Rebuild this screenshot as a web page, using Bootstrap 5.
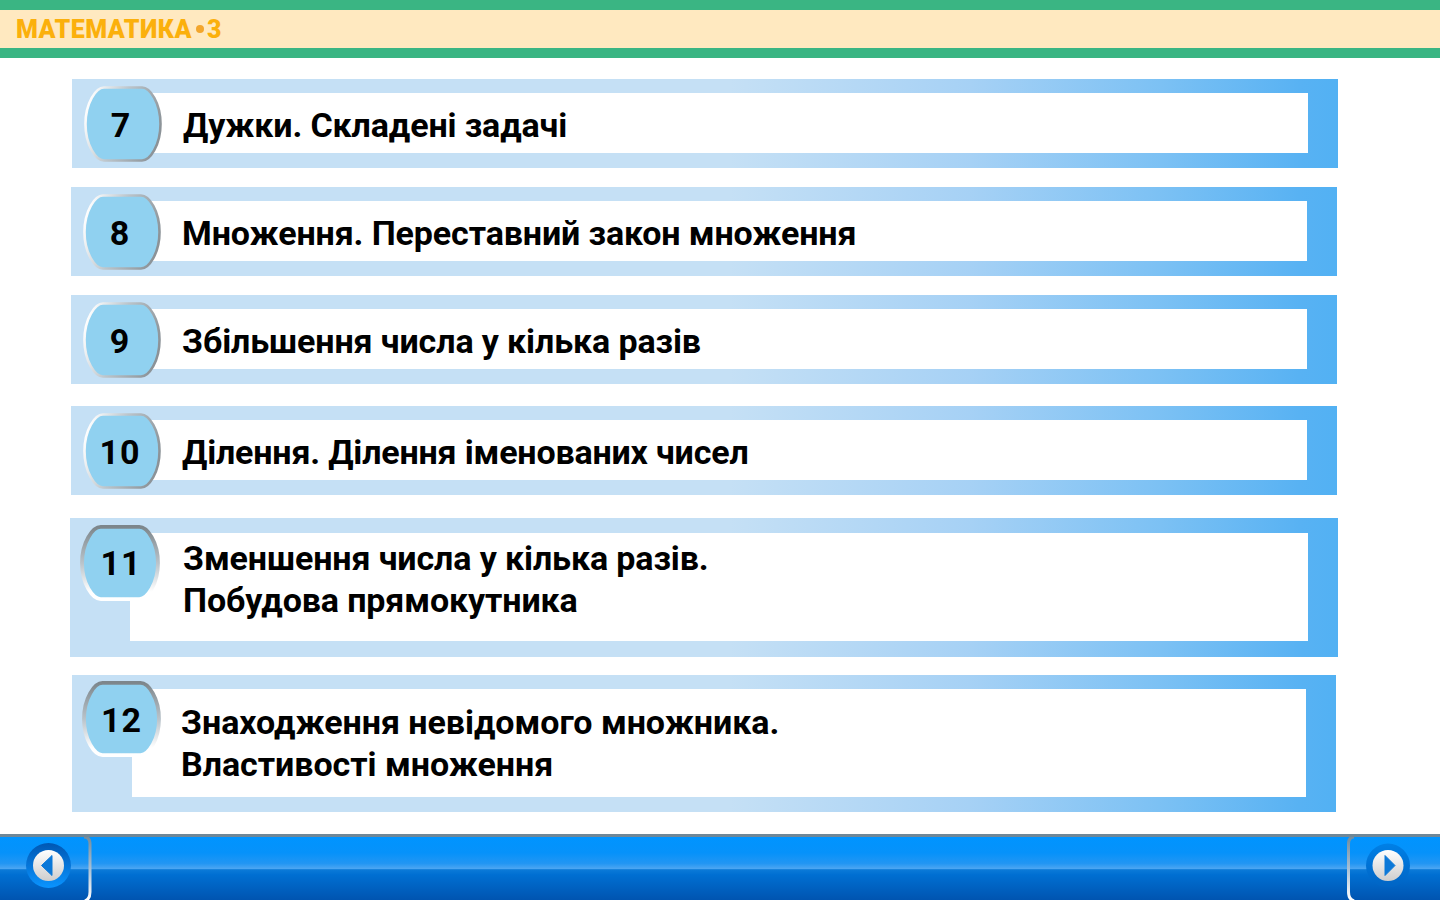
<!DOCTYPE html>
<html lang="uk">
<head>
<meta charset="utf-8">
<meta name="viewport" content="width=device-width, initial-scale=1">
<title>Математика 3</title>
<link href="https://cdn.jsdelivr.net/npm/bootstrap@5.3.0/dist/css/bootstrap.min.css" rel="stylesheet">
<script src="https://cdn.jsdelivr.net/npm/bootstrap@5.3.0/dist/js/bootstrap.bundle.min.js" defer></script>
<style>
body{font-family:Roboto,"Liberation Sans",sans-serif;color:#000;background:#fff}
.topbar{height:58px;background:#ffe9c0;border-top:10px solid #3ab583;border-bottom:10px solid #3ab583;padding-left:16px}
.brand{font-size:25px;font-weight:900;line-height:36px;color:#fbb00c;letter-spacing:.45px;padding-top:2px}
.brand .dot{width:8px;height:8px;border-radius:50%;background:#f3a62c;margin:0 3px 2px 4px}
.lessons{height:776px;padding-top:21px}
.lesson{width:1266px;height:89px;margin-left:71px;margin-bottom:19px;padding:14px 30px 15px 59px;text-decoration:none;color:#000;
background:linear-gradient(90deg,#c5e0f5 0,#c5e0f5 52%,#a6d1f5 71%,#7cc1f4 86%,#58b2f3 97%,#52b1f3 100%)}
.lesson:first-child{margin-left:72px}
.lesson.ten{margin-top:22px;margin-bottom:23px}
.lesson.tall{height:139px;width:1268px;margin-left:70px;padding:15px 30px 16px 60px;margin-bottom:18px}
.lesson.last{height:137px;width:1264px;margin-left:72px;padding:14px 30px 15px 60px}
.panel{background:#fff;padding-left:52px}
.title{font-size:34px;font-weight:700;line-height:42px;white-space:nowrap;letter-spacing:-.12px}
.ten .title{letter-spacing:-.18px}
.last .title{letter-spacing:-.04px}
.num{left:12px;top:7px;width:78px;height:76px;font-size:34px;font-weight:700;letter-spacing:1px}
.num svg{left:0;top:0}
.num span{padding-right:4px;padding-top:2px}
.tall .num{left:10px;width:80px}
.last .num{left:10px;top:6px}
.tall .num span{padding-left:2px;padding-right:0;padding-top:0}
.last .num span{padding-left:1px;padding-right:0;padding-top:2px}
.tall .panel{padding-left:53px;padding-top:4px}
.last .panel{padding-left:49px;padding-top:12px}
.footer{height:66px;border-top:3px solid #6f8797;background:linear-gradient(#0094ff 0,#0692fa 25%,#2296f3 42%,#4aa5f2 50%,#0b7ad8 52%,#006fd2 60%,#0054b0 100%)}
</style>
</head>
<body class="overflow-hidden">
<svg width="0" height="0" class="position-absolute"><defs>
<linearGradient id="gd" x1="0" y1=".3" x2="1" y2=".6"><stop offset="0" stop-color="#fff"/><stop offset=".45" stop-color="#bcc5cb"/><stop offset="1" stop-color="#8b9297"/></linearGradient>
<linearGradient id="gv" x1="0" y1="0" x2="0" y2="1"><stop offset="0" stop-color="#7d868b"/><stop offset=".5" stop-color="#b9c3ca"/><stop offset=".9" stop-color="#fff"/></linearGradient>
<linearGradient id="ring" x1="0" y1="0" x2="0" y2="1"><stop offset="0" stop-color="#0057b3"/><stop offset="1" stop-color="#0a94ff"/></linearGradient>
<linearGradient id="ring2" x1="0" y1="0" x2="0" y2="1"><stop offset="0" stop-color="#0080e6"/><stop offset="1" stop-color="#0064c4"/></linearGradient>
<linearGradient id="disc" x1="0" y1="0" x2="0" y2="1"><stop offset="0" stop-color="#fff"/><stop offset="1" stop-color="#cdcdcd"/></linearGradient>
<linearGradient id="edge" x1="0" y1="0" x2="0" y2="66" gradientUnits="userSpaceOnUse"><stop offset="0" stop-color="#6f8797"/><stop offset=".5" stop-color="#a5bdd2"/><stop offset="1" stop-color="#fff"/></linearGradient>
<path id="pill" d="M20 1.500H58C66 1.500 76.500 17 76.500 38S66 74.500 58 74.500H20C12 74.500 1.500 59 1.500 38S12 1.500 20 1.500Z"/>
</defs></svg>
<header class="topbar d-flex align-items-center">
<div class="brand d-flex align-items-center"><span>МАТЕМАТИКА</span><i class="dot"></i><span>3</span></div>
</header>
<main class="lessons">
<a class="lesson d-block position-relative"><div class="panel h-100 d-flex align-items-center"><div class="title pt-1">Дужки. Складені задачі</div></div><div class="num position-absolute d-flex align-items-center justify-content-center"><svg class="position-absolute" width="78" height="76"><use href="#pill" fill="#90d1f0" stroke="url(#gd)" stroke-width="2.6"/></svg><span class="position-relative">7</span></div></a>
<a class="lesson d-block position-relative"><div class="panel h-100 d-flex align-items-center"><div class="title pt-1">Множення. Переставний закон множення</div></div><div class="num position-absolute d-flex align-items-center justify-content-center"><svg class="position-absolute" width="78" height="76"><use href="#pill" fill="#90d1f0" stroke="url(#gd)" stroke-width="2.6"/></svg><span class="position-relative">8</span></div></a>
<a class="lesson d-block position-relative"><div class="panel h-100 d-flex align-items-center"><div class="title pt-1">Збільшення числа у кілька разів</div></div><div class="num position-absolute d-flex align-items-center justify-content-center"><svg class="position-absolute" width="78" height="76"><use href="#pill" fill="#90d1f0" stroke="url(#gd)" stroke-width="2.6"/></svg><span class="position-relative">9</span></div></a>
<a class="lesson ten d-block position-relative"><div class="panel h-100 d-flex align-items-center"><div class="title pt-1">Ділення. Ділення іменованих чисел</div></div><div class="num position-absolute d-flex align-items-center justify-content-center"><svg class="position-absolute" width="78" height="76"><use href="#pill" fill="#90d1f0" stroke="url(#gd)" stroke-width="2.6"/></svg><span class="position-relative">10</span></div></a>
<a class="lesson tall d-block position-relative"><div class="panel h-100"><div class="title">Зменшення числа у кілька разів.<br>Побудова прямокутника</div></div><div class="num position-absolute d-flex align-items-center justify-content-center"><svg class="position-absolute" width="80" height="76" viewBox="-.5 -.5 79 77" preserveAspectRatio="none"><use href="#pill" fill="#90d1f0" stroke="url(#gv)" stroke-width="3.8"/></svg><span class="position-relative">11</span></div></a>
<a class="lesson last d-block position-relative"><div class="panel h-100"><div class="title">Знаходження невідомого множника.<br>Властивості множення</div></div><div class="num position-absolute d-flex align-items-center justify-content-center"><svg class="position-absolute" width="79" height="76" viewBox="-.5 -.5 79 77" preserveAspectRatio="none"><use href="#pill" fill="#90d1f0" stroke="url(#gv)" stroke-width="3.8"/></svg><span class="position-relative">12</span></div></a>
</main>
<footer class="footer d-flex justify-content-between">
<svg width="96" height="63" viewBox="0 3 96 63"><path d="M84 3Q90 3 90 10V58Q90 65 85 67" fill="none" stroke="url(#edge)" stroke-width="3"/><circle cx="48.500" cy="31.500" r="22.500" fill="url(#ring)"/><circle cx="48.500" cy="31.500" r="15.500" fill="url(#disc)"/><path d="M41.500 31.500L52 21.500V41.500Z" fill="#0b78d8" stroke="#0b78d8" stroke-linejoin="round"/></svg>
<svg width="96" height="63" viewBox="0 3 96 63"><path d="M10 3Q4.500 3 4.500 10V58Q4.500 65 10 67" fill="none" stroke="url(#edge)" stroke-width="3"/><circle cx="44" cy="31.500" r="22" fill="url(#ring2)"/><circle cx="44" cy="31.500" r="15.500" fill="url(#disc)"/><path d="M51 31.500L41 21.500V41.500Z" fill="#0b78d8" stroke="#0b78d8" stroke-linejoin="round"/></svg>
</footer>
</body>
</html>
